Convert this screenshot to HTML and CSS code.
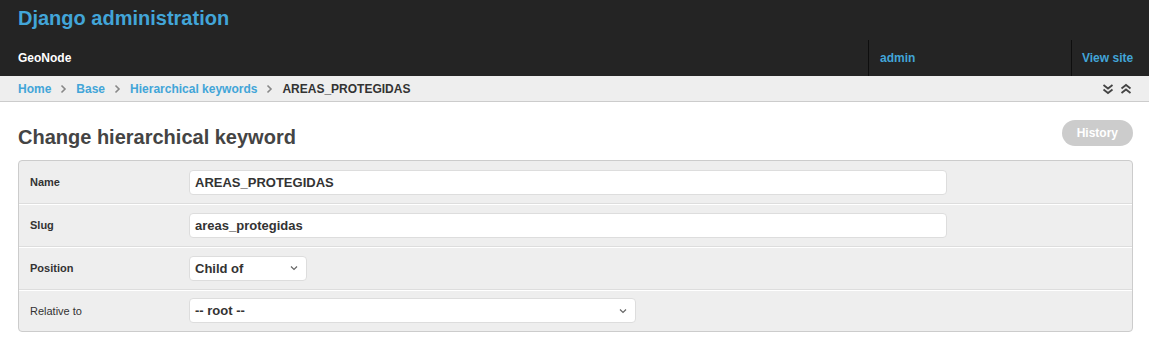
FILE: index.html
```html
<!DOCTYPE html>
<html lang="en">
<head>
    <meta charset="UTF-8">
    <title>Change hierarchical keyword | Django site admin</title>
    <link rel="stylesheet" href="styles.css">
</head>
<body>
    <div class="header">
        <div class="branding">
            <h1 class="site-name">Django administration</h1>
        </div>
        <div class="nav-bar">
            <div class="nav-brand">GeoNode</div>
            <a href="#" class="nav-item nav-user">admin</a>
            <a href="#" class="nav-item nav-site">View site</a>
        </div>
    </div>

    <div class="breadcrumbs">
        <div class="crumbs">
            <a href="#">Home</a>
            <svg class="crumb-sep" width="9" height="10" viewBox="0 0 9 10"><path d="M2.5 1.5 L6 5 L2.5 8.5" fill="none" stroke="#888" stroke-width="1.6"/></svg>
            <a href="#">Base</a>
            <svg class="crumb-sep" width="9" height="10" viewBox="0 0 9 10"><path d="M2.5 1.5 L6 5 L2.5 8.5" fill="none" stroke="#888" stroke-width="1.6"/></svg>
            <a href="#">Hierarchical keywords</a>
            <svg class="crumb-sep" width="9" height="10" viewBox="0 0 9 10"><path d="M2.5 1.5 L6 5 L2.5 8.5" fill="none" stroke="#888" stroke-width="1.6"/></svg>
            <span class="crumb-current">AREAS_PROTEGIDAS</span>
        </div>
        <div class="toggles">
            <svg width="12" height="12" viewBox="0 0 12 12"><path d="M1.5 2 L6 5.5 L10.5 2 M1.5 6.5 L6 10 L10.5 6.5" fill="none" stroke="#444" stroke-width="1.8"/></svg>
            <svg width="12" height="12" viewBox="0 0 12 12"><path d="M1.5 5.5 L6 2 L10.5 5.5 M1.5 10 L6 6.5 L10.5 10" fill="none" stroke="#444" stroke-width="1.8"/></svg>
        </div>
    </div>

    <div class="content">
        <div class="title-row">
            <h2 class="page-title">Change hierarchical keyword</h2>
            <a href="#" class="history-link">History</a>
        </div>

        <div class="fieldset">
            <div class="form-row">
                <label class="field-label required">Name</label>
                <div class="text-input wide">AREAS_PROTEGIDAS</div>
            </div>
            <div class="form-row">
                <label class="field-label required">Slug</label>
                <div class="text-input wide">areas_protegidas</div>
            </div>
            <div class="form-row">
                <label class="field-label required">Position</label>
                <div class="select-box small">
                    <span>Child of</span>
                    <span class="select-arrow"><svg width="8" height="6" viewBox="0 0 8 6"><path d="M1 1.5 L4 4.5 L7 1.5" fill="none" stroke="#666" stroke-width="1.2"/></svg></span>
                </div>
            </div>
            <div class="form-row last">
                <label class="field-label">Relative to</label>
                <div class="select-box medium">
                    <span>-- root --</span>
                    <span class="select-arrow"><svg width="8" height="6" viewBox="0 0 8 6"><path d="M1 1.5 L4 4.5 L7 1.5" fill="none" stroke="#666" stroke-width="1.2"/></svg></span>
                </div>
            </div>
        </div>
    </div>
</body>
</html>
```

FILE: styles.css
```css
* {
    box-sizing: border-box;
    margin: 0;
    padding: 0;
}

body {
    font-family: "Liberation Sans", Arial, sans-serif;
    color: #333;
    background: #fff;
}

a {
    text-decoration: none;
}

.header {
    background: #242424;
}

.branding {
    height: 40px;
    padding: 6px 18px 0;
}

.site-name {
    font-size: 20px;
    font-weight: bold;
    color: #42a5d8;
    line-height: 24px;
}

.nav-bar {
    display: flex;
    height: 36px;
    align-items: stretch;
}

.nav-brand {
    flex: 1;
    display: flex;
    align-items: center;
    padding-left: 18px;
    color: #fff;
    font-weight: bold;
    font-size: 12px;
}

.nav-item {
    display: flex;
    align-items: center;
    border-left: 1px solid #0e0e0e;
    color: #42a5d8;
    font-weight: bold;
    font-size: 12px;
}

.nav-user {
    width: 203px;
    padding-left: 11px;
}

.nav-site {
    width: 78px;
    padding-left: 10px;
}

.breadcrumbs {
    display: flex;
    justify-content: space-between;
    align-items: center;
    height: 26px;
    padding: 0 17px 0 18px;
    background: #eee;
    border-bottom: 1px solid #ccc;
    font-size: 12px;
    font-weight: bold;
}

.crumbs {
    display: flex;
    align-items: center;
    gap: 6px;
}

.crumbs a {
    color: #42a5d8;
}

.crumb-sep {
    margin: 0 2px;
}

.crumb-current {
    color: #333;
}

.toggles {
    display: flex;
    gap: 6px;
    padding-top: 1px;
}

.content {
    padding: 18px 16px 0 18px;
}

.title-row {
    display: flex;
    justify-content: space-between;
    align-items: flex-start;
    height: 40px;
}

.page-title {
    font-size: 20px;
    font-weight: bold;
    color: #444;
    line-height: 24px;
    padding-top: 5px;
}

.history-link {
    display: inline-block;
    padding: 0 15px;
    height: 26px;
    line-height: 26px;
    border-radius: 13px;
    background: #ccc;
    color: #fff;
    font-size: 12px;
    font-weight: bold;
}

.fieldset {
    border: 1px solid #ccc;
    border-radius: 4px;
    background: #eee;
}

.form-row {
    display: flex;
    align-items: center;
    height: 43px;
    padding: 0 11px;
    border-bottom: 1px solid #ddd;
    box-shadow: 0 1px 0 #fff;
}

.form-row.last {
    border-bottom: none;
    box-shadow: none;
    height: 41px;
}

.field-label {
    width: 159px;
    font-size: 11px;
    color: #333;
}

.field-label.required {
    font-weight: bold;
}

.text-input,
.select-box {
    height: 25px;
    background: #fff;
    border: 1px solid #ddd;
    border-radius: 4px;
    font-size: 13px;
    font-weight: bold;
    color: #333;
    display: flex;
    align-items: center;
    padding-left: 5px;
}

.text-input.wide {
    width: 758px;
}

.select-box {
    justify-content: space-between;
    padding-right: 8px;
}

.select-box.small {
    width: 118px;
}

.select-box.medium {
    width: 447px;
}

.select-arrow {
    display: flex;
    align-items: center;
}
```
